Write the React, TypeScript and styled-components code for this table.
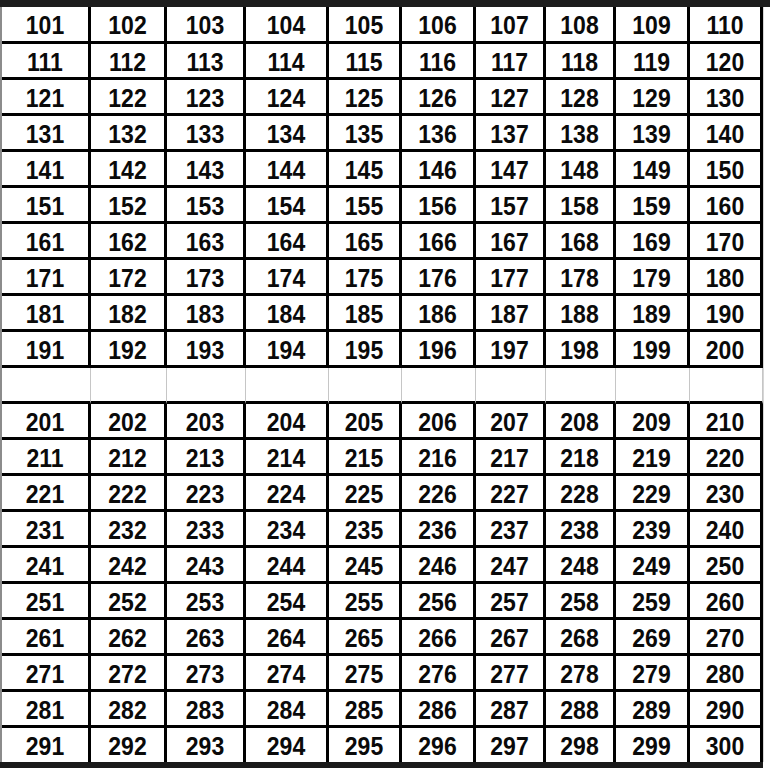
import React from "react";
import styled, { createGlobalStyle } from "styled-components";

const Global = createGlobalStyle`
  html, body { margin: 0; padding: 0; background: #ffffff; }
  body { font-family: "Liberation Sans", Arial, sans-serif; }
`;

const COLS = [89, 76, 79, 83, 73, 74, 70, 70, 74, 73];

const Page = styled.div`
  width: 770px;
  height: 768px;
  background: #ffffff;
  overflow: hidden;
  display: flex;
  flex-direction: column;
`;

const TopBar = styled.div`
  flex: none;
  height: 7px;
  background: #1d1d1d;
`;

const Sheet = styled.div`
  flex: none;
  width: max-content;
  display: grid;
  grid-template-columns: ${COLS.map((c) => `${c}px`).join(" ")};
  grid-template-rows: 37px repeat(19, 36px) 34px;
  border-left: 2px solid #8c8c8c;
  border-right: 1px solid #d6d6d6;
`;

const Cell = styled.div<{ $blank?: boolean; $last?: boolean }>`
  box-sizing: border-box;
  display: flex;
  align-items: center;
  justify-content: center;
  padding-top: 3px;
  background: #ffffff;
  border-right: ${(p) => (p.$blank ? "1px solid #c6c6c6" : "3px solid #000000")};
  border-bottom: ${(p) => (p.$last ? "none" : "3px solid #000000")};
`;

const Num = styled.span`
  display: inline-block;
  font-family: "Liberation Sans", Arial, sans-serif;
  font-weight: 700;
  font-size: 23px;
  line-height: 1;
  color: #0a0a0a;
  transform: scaleY(1.15);
`;

const BottomBar = styled.div`
  flex: none;
  width: 763px;
  height: 6px;
  background: #1a1a1a;
`;

type Row = { blank: boolean; nums: number[] };

const rows: Row[] = [];
for (let r = 0; r < 10; r++) {
  rows.push({ blank: false, nums: Array.from({ length: 10 }, (_, i) => 101 + r * 10 + i) });
}
rows.push({ blank: true, nums: Array.from({ length: 10 }, () => 0) });
for (let r = 0; r < 10; r++) {
  rows.push({ blank: false, nums: Array.from({ length: 10 }, (_, i) => 201 + r * 10 + i) });
}

export default function App() {
  return (
    <>
      <Global />
      <Page>
        <TopBar />
        <Sheet>
          {rows.map((row, ri) =>
            row.nums.map((n, ci) => (
              <Cell key={`${ri}-${ci}`} $blank={row.blank} $last={ri === rows.length - 1}>
                {row.blank ? null : <Num>{n}</Num>}
              </Cell>
            ))
          )}
        </Sheet>
        <BottomBar />
      </Page>
    </>
  );
}
